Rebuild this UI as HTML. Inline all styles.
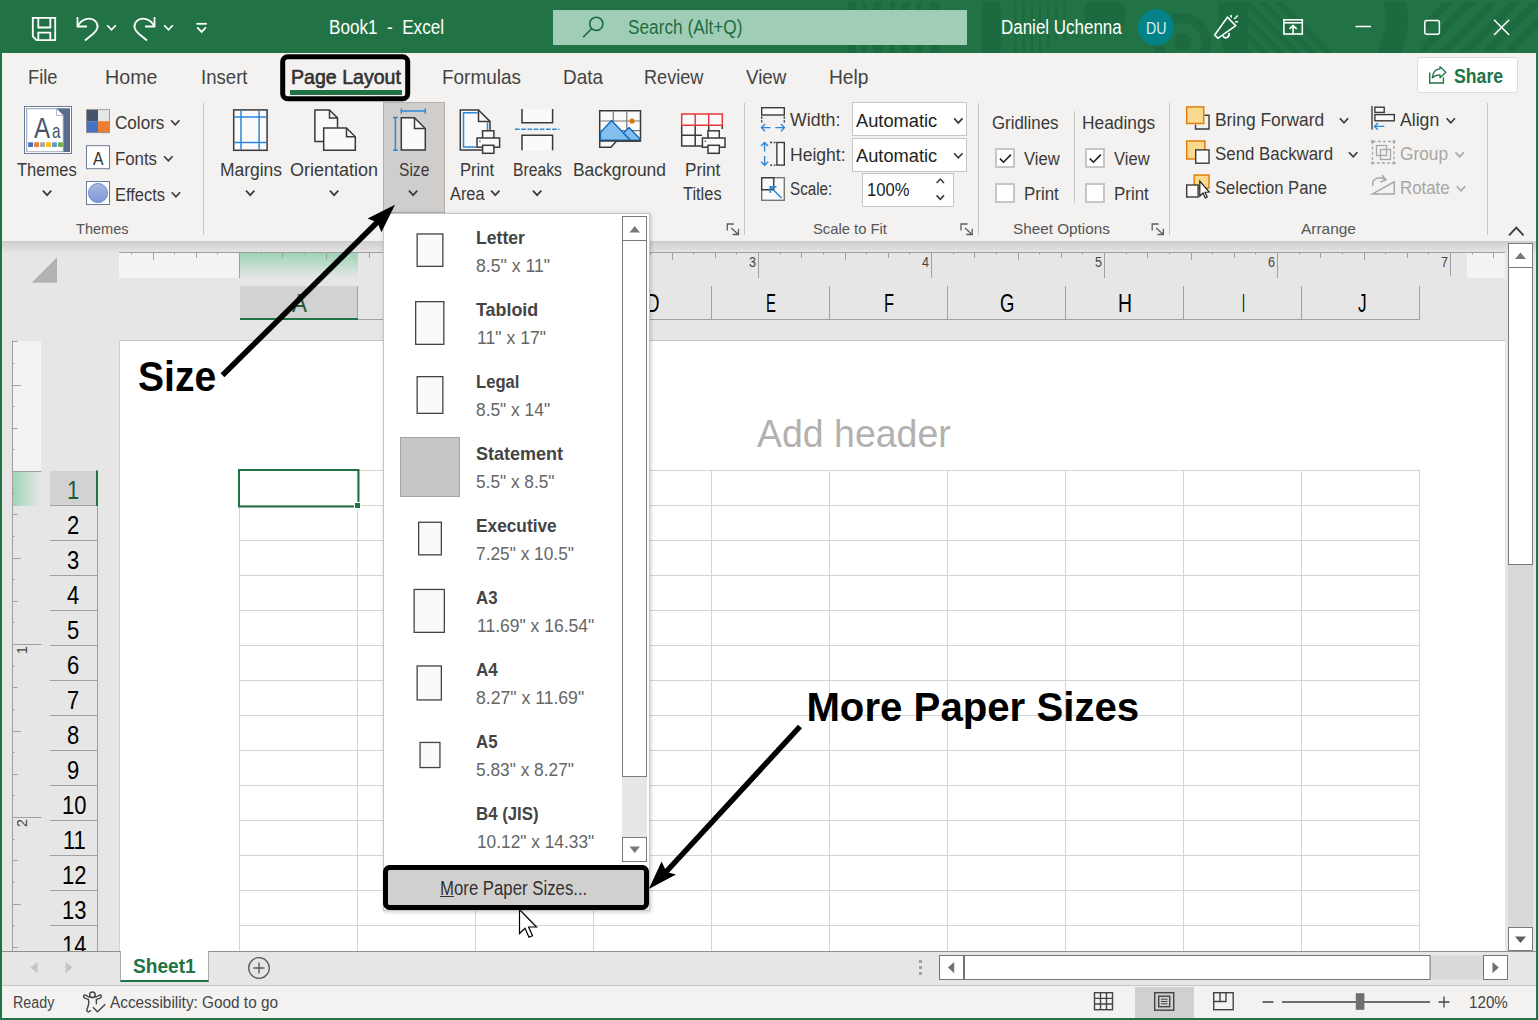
<!DOCTYPE html>
<html lang="en"><head><meta charset="utf-8"><title>Book1 - Excel</title>
<style>
html,body{margin:0;padding:0;background:#fff}
body{width:1538px;height:1020px;position:relative;overflow:hidden;font-family:"Liberation Sans",sans-serif}
#app{position:absolute;left:0;top:0;width:1538px;height:1020px;overflow:hidden}
.b{position:absolute;display:block}
.t{position:absolute;display:block;white-space:pre;line-height:1;transform-origin:0 0}
svg{overflow:visible}
</style></head><body><div id="app">
<div id="titlebar">
<div class="b" style="left:0px;top:0px;width:1538px;height:53px;background:#217346"></div>
<svg class="b" style="left:0px;top:0px;" width="1538" height="53" viewBox="0 0 1538 53">
<defs><clipPath id="tbc"><rect x="0" y="2" width="1538" height="51"/></clipPath>
<clipPath id="tbl"><rect x="1247" y="2" width="120" height="51"/></clipPath>
<clipPath id="tbr"><path d="M1430 2 L1422 51 H1538 V2 Z"/></clipPath></defs>
<g clip-path="url(#tbc)">
<g fill="#1e6a40" stroke="none">
 <rect x="848" y="0" width="8" height="53"/><rect x="862" y="0" width="5" height="53"/><rect x="873" y="0" width="9" height="53"/><rect x="890" y="0" width="5" height="53"/><rect x="901" y="0" width="8" height="53"/><rect x="916" y="0" width="6" height="53"/><rect x="930" y="0" width="10" height="53"/>
 <rect x="981.700" y="0" width="19" height="53"/>
 <rect x="1014.200" y="0" width="2.400" height="53"/><rect x="1022.400" y="0" width="2.400" height="53"/><rect x="1030.600" y="0" width="2.400" height="53"/><rect x="1038.800" y="0" width="2.400" height="53"/><rect x="1047" y="0" width="2.400" height="46"/><rect x="1055.200" y="0" width="2.400" height="40"/><rect x="1063.300" y="0" width="2.400" height="40"/>
 <circle cx="1105" cy="14" r="21"/>
 <circle cx="1182.500" cy="42" r="8.500"/>
 <path d="M1226 0 Q1224 30 1232 53 H1248 V0 Z"/>
</g>
<g fill="none" stroke="#1e6a40">
 <circle cx="1182.500" cy="42" r="24" stroke-width="10"/>
 <circle cx="1313" cy="18" r="83.750" stroke-width="22.500"/>
</g>
<g fill="#1e6a40" clip-path="url(#tbl)"><path d="M1193.3 2 H1201.5 L1252.5 53 H1244.3 Z"/><path d="M1209.3 2 H1217.5 L1268.5 53 H1260.3 Z"/><path d="M1225.3 2 H1233.5 L1284.5 53 H1276.3 Z"/><path d="M1241.3 2 H1249.5 L1300.5 53 H1292.3 Z"/><path d="M1257.3 2 H1265.5 L1316.5 53 H1308.3 Z"/><path d="M1273.3 2 H1281.5 L1332.5 53 H1324.3 Z"/></g>
<g fill="#1e6a40" clip-path="url(#tbr)"><path d="M1443.3 2 H1454.3 L1403.3 53 H1392.3 Z"/><path d="M1465.3 2 H1476.3 L1425.3 53 H1414.3 Z"/><path d="M1487.3 2 H1498.3 L1447.3 53 H1436.3 Z"/><path d="M1509.3 2 H1520.3 L1469.3 53 H1458.3 Z"/><path d="M1531.3 2 H1542.3 L1491.3 53 H1480.3 Z"/><path d="M1553.3 2 H1564.3 L1513.3 53 H1502.3 Z"/></g>
</g>
</svg>
<div class="b" style="left:553px;top:10px;width:414px;height:35px;background:#a0cdb5"></div>
<svg class="b" style="left:0px;top:0px;" width="1538" height="53" viewBox="0 0 1538 53">
<g fill="none" stroke="#fff" stroke-width="1.800" stroke-linejoin="miter">
 <path d="M32.8 17.8 H55.2 V40.2 H36.5 L32.8 36.5 Z"/>
 <path d="M38.3 17.8 V27.5 H50.3 V17.8"/>
 <path d="M38.3 40.2 V32.6 H50.3 V40.2"/>
 <path d="M77.5 17 V26.5 H87"/>
 <path d="M77.8 26.3 C81 19.5 90 16 95.2 21 C99.5 25.5 97.5 30 93.5 33.5 L85 40.5"/>
 <path d="M154.5 17 V26.5 H145"/>
 <path d="M154.2 26.3 C151 19.5 142 16 136.8 21 C132.500 25.5 134.500 30 138.500 33.5 L147 40.5"/>
 <path d="M196.500 23.800 H206.800"/>
</g>
<polyline points="107.2,25.25 111.5,29.75 115.8,25.25" fill="none" stroke="#fff" stroke-width="1.8"/><polyline points="164.2,25.25 168.5,29.75 172.8,25.25" fill="none" stroke="#fff" stroke-width="1.8"/><polyline points="197.3,27.35 201.6,31.85 205.9,27.35" fill="none" stroke="#fff" stroke-width="1.8"/><g fill="none" stroke="#1e6e42" stroke-width="1.6"><circle cx="596.3" cy="23.8" r="6.6"/><path d="M591.6 28.600 L583.200 37.200"/></g><circle cx="1156" cy="27.400" r="18.200" fill="#038387"/><g fill="none" stroke="#fff" stroke-width="1.600" stroke-linejoin="miter" stroke-linecap="butt">
<path d="M1214.700 35 L1227.400 17.300 L1235.700 25.600 L1218 38.300 Z"/>
<path d="M1222.600 35.200 Q1224 38.600 1227 37.600 Q1229.700 36.400 1229 32.800"/>
<path d="M1230.800 15 L1231.300 17.600 M1234.300 19 L1237.800 15.500 M1235.200 21.800 H1238"/>
</g><g fill="none" stroke="#fff" stroke-width="1.600"><rect x="1283.900" y="19.800" width="18.400" height="14.200"/><path d="M1284 22.800 H1302"/><path d="M1293.100 34 V26 M1289.500 28.800 L1293.100 25.600 L1296.700 28.800"/></g><g fill="none" stroke="#fff" stroke-width="1.5"><path d="M1355.500 26.500 H1371"/><rect x="1424.800" y="20.600" width="14.600" height="13.600" rx="2"/><path d="M1494 19.800 L1509.200 35 M1509.200 19.800 L1494 35"/></g></svg>
<span class="t" style="left:329.00px;top:18.00px;font-size:19.5px;color:#fff;transform:scaleX(0.8769);">Book1  -  Excel</span>
<span class="t" style="left:627.50px;top:18.00px;font-size:19.5px;color:#1e6e42;transform:scaleX(0.8842);">Search (Alt+Q)</span>
<span class="t" style="left:1000.80px;top:18.00px;font-size:19.5px;color:#fff;transform:scaleX(0.8699);">Daniel Uchenna</span>
<span class="t" style="left:1146.00px;top:20.00px;font-size:17px;color:#d7eef0;transform:scaleX(0.8350);">DU</span>
</div>
<div id="ribbon">
<div class="b" style="left:0px;top:53px;width:1538px;height:188px;background:#f3f2f1"></div>
<span class="t" style="left:27.50px;top:67.00px;font-size:20.3px;color:#444;transform:scaleX(0.9021);">File</span>
<span class="t" style="left:104.50px;top:67.00px;font-size:20.3px;color:#444;transform:scaleX(0.9695);">Home</span>
<span class="t" style="left:200.50px;top:67.00px;font-size:20.3px;color:#444;transform:scaleX(0.9163);">Insert</span>
<span class="t" style="left:442.00px;top:67.00px;font-size:20.3px;color:#444;transform:scaleX(0.9338);">Formulas</span>
<span class="t" style="left:562.50px;top:67.00px;font-size:20.3px;color:#444;transform:scaleX(0.9324);">Data</span>
<span class="t" style="left:643.50px;top:67.00px;font-size:20.3px;color:#444;transform:scaleX(0.8927);">Review</span>
<span class="t" style="left:745.50px;top:67.00px;font-size:20.3px;color:#444;transform:scaleX(0.9268);">View</span>
<span class="t" style="left:829.00px;top:67.00px;font-size:20.3px;color:#444;transform:scaleX(0.9461);">Help</span>
<span class="t" style="left:290.80px;top:67.00px;font-size:20.3px;color:#323130;transform:scaleX(0.9649);-webkit-text-stroke:0.600px #323130;">Page Layout</span>
<div class="b" style="left:290px;top:90px;width:112px;height:4.5px;background:#217346"></div>
<div class="b" style="left:1417px;top:57px;width:101px;height:36px;background:#fff;border:1px solid #dddbd9;border-radius:4px;box-sizing:border-box"></div>
<span class="t" style="left:1454.00px;top:66.00px;font-size:20.3px;color:#217346;font-weight:700;transform:scaleX(0.8723);">Share</span>
<div class="b" style="left:203px;top:103px;width:1px;height:132px;background:#c8c6c4"></div>
<div class="b" style="left:744px;top:103px;width:1px;height:132px;background:#c8c6c4"></div>
<div class="b" style="left:978px;top:103px;width:1px;height:132px;background:#c8c6c4"></div>
<div class="b" style="left:1169px;top:103px;width:1px;height:132px;background:#c8c6c4"></div>
<div class="b" style="left:1487px;top:103px;width:1px;height:132px;background:#c8c6c4"></div>
<div class="b" style="left:1074px;top:111px;width:1px;height:92px;background:#c8c6c4"></div>
<div class="b" style="left:383px;top:102px;width:62px;height:111px;background:#d0cecc;border:1px solid #b3b0ad;box-sizing:border-box"></div>
<div class="b" style="left:852.4px;top:102.3px;width:114.2px;height:34px;background:#fff;border:1px solid #c8c6c4;box-sizing:border-box"></div>
<div class="b" style="left:852.4px;top:137.5px;width:114.2px;height:34px;background:#fff;border:1px solid #c8c6c4;box-sizing:border-box"></div>
<div class="b" style="left:862.4px;top:172.6px;width:91.2px;height:34px;background:#fff;border:1px solid #c8c6c4;box-sizing:border-box"></div>
<div class="b" style="left:995.3px;top:148.4px;width:19.5px;height:19.5px;background:#fff;border:2px solid #c8c6c4;box-sizing:border-box"></div>
<div class="b" style="left:995.3px;top:183.2px;width:19.5px;height:19.5px;background:#fff;border:2px solid #c8c6c4;box-sizing:border-box"></div>
<div class="b" style="left:1085.2px;top:148.4px;width:19.5px;height:19.5px;background:#fff;border:2px solid #c8c6c4;box-sizing:border-box"></div>
<div class="b" style="left:1085.2px;top:183.2px;width:19.5px;height:19.5px;background:#fff;border:2px solid #c8c6c4;box-sizing:border-box"></div>
<span class="t" style="left:17.30px;top:161.00px;font-size:18px;color:#3b3a39;transform:scaleX(0.9185);">Themes</span>
<span class="t" style="left:114.60px;top:114.00px;font-size:18px;color:#3b3a39;transform:scaleX(0.9500);">Colors</span>
<span class="t" style="left:115.00px;top:150.00px;font-size:18px;color:#3b3a39;transform:scaleX(0.9333);">Fonts</span>
<span class="t" style="left:115.00px;top:186.00px;font-size:18px;color:#3b3a39;transform:scaleX(0.9141);">Effects</span>
<span class="t" style="left:220.20px;top:161.00px;font-size:18px;color:#3b3a39;transform:scaleX(0.9688);">Margins</span>
<span class="t" style="left:290.40px;top:161.00px;font-size:18px;color:#3b3a39;transform:scaleX(0.9994);">Orientation</span>
<span class="t" style="left:398.70px;top:161.00px;font-size:18px;color:#3b3a39;transform:scaleX(0.8657);">Size</span>
<span class="t" style="left:459.50px;top:161.00px;font-size:18px;color:#3b3a39;transform:scaleX(0.9216);">Print</span>
<span class="t" style="left:449.90px;top:185.00px;font-size:18px;color:#3b3a39;transform:scaleX(0.9093);">Area</span>
<span class="t" style="left:513.20px;top:161.00px;font-size:18px;color:#3b3a39;transform:scaleX(0.8714);">Breaks</span>
<span class="t" style="left:573.00px;top:161.00px;font-size:18px;color:#3b3a39;transform:scaleX(0.9682);">Background</span>
<span class="t" style="left:685.00px;top:161.00px;font-size:18px;color:#3b3a39;transform:scaleX(0.9541);">Print</span>
<span class="t" style="left:682.70px;top:185.00px;font-size:18px;color:#3b3a39;transform:scaleX(0.9115);">Titles</span>
<span class="t" style="left:790.00px;top:111.00px;font-size:18px;color:#3b3a39;transform:scaleX(0.9882);">Width:</span>
<span class="t" style="left:790.00px;top:146.00px;font-size:18px;color:#3b3a39;transform:scaleX(0.9746);">Height:</span>
<span class="t" style="left:790.00px;top:180.00px;font-size:18px;color:#3b3a39;transform:scaleX(0.8452);">Scale:</span>
<span class="t" style="left:856.00px;top:112.00px;font-size:18px;color:#201f1e;transform:scaleX(1.0144);">Automatic</span>
<span class="t" style="left:856.00px;top:147.00px;font-size:18px;color:#201f1e;transform:scaleX(1.0144);">Automatic</span>
<span class="t" style="left:866.60px;top:181.00px;font-size:18px;color:#201f1e;transform:scaleX(0.9229);">100%</span>
<span class="t" style="left:991.60px;top:114.00px;font-size:18px;color:#3b3a39;transform:scaleX(0.9360);">Gridlines</span>
<span class="t" style="left:1081.80px;top:114.00px;font-size:18px;color:#3b3a39;transform:scaleX(0.9638);">Headings</span>
<span class="t" style="left:1023.80px;top:150.00px;font-size:18px;color:#3b3a39;transform:scaleX(0.9213);">View</span>
<span class="t" style="left:1024.20px;top:185.00px;font-size:18px;color:#3b3a39;transform:scaleX(0.9378);">Print</span>
<span class="t" style="left:1113.70px;top:150.00px;font-size:18px;color:#3b3a39;transform:scaleX(0.9213);">View</span>
<span class="t" style="left:1114.10px;top:185.00px;font-size:18px;color:#3b3a39;transform:scaleX(0.9378);">Print</span>
<span class="t" style="left:1214.70px;top:111.00px;font-size:18px;color:#3b3a39;transform:scaleX(0.9651);">Bring Forward</span>
<span class="t" style="left:1214.70px;top:145.00px;font-size:18px;color:#3b3a39;transform:scaleX(0.9369);">Send Backward</span>
<span class="t" style="left:1214.70px;top:179.00px;font-size:18px;color:#3b3a39;transform:scaleX(0.9240);">Selection Pane</span>
<span class="t" style="left:1399.80px;top:111.00px;font-size:18px;color:#3b3a39;transform:scaleX(0.9788);">Align</span>
<span class="t" style="left:1399.80px;top:145.00px;font-size:18px;color:#a8a6a4;transform:scaleX(0.9590);">Group</span>
<span class="t" style="left:1399.80px;top:179.00px;font-size:18px;color:#a8a6a4;transform:scaleX(0.9369);">Rotate</span>
<span class="t" style="left:75.60px;top:221.00px;font-size:15px;color:#555;transform:scaleX(0.9705);">Themes</span>
<span class="t" style="left:812.80px;top:221.00px;font-size:15px;color:#555;transform:scaleX(0.9860);">Scale to Fit</span>
<span class="t" style="left:1013.40px;top:221.00px;font-size:15px;color:#555;transform:scaleX(1.0195);">Sheet Options</span>
<span class="t" style="left:1300.90px;top:221.00px;font-size:15px;color:#555;transform:scaleX(1.0291);">Arrange</span>
<svg class="b" style="left:0px;top:0px;" width="1538" height="245" viewBox="0 0 1538 245"><rect x="24.500" y="106.500" width="47" height="47" fill="#fff" stroke="#6b7a99" stroke-width="1"/><rect x="26.500" y="108.500" width="43" height="43" fill="none" stroke="#9aa5b8" stroke-width="0.800"/><rect x="57" y="108.500" width="13" height="43.500" fill="#5a6b8c"/><path d="M26.800 108.800 H56.500 L63.200 115.500 V151.700 H26.800 Z" fill="#fff" stroke="#9aa5b8" stroke-width="0.800"/><path d="M56.500 108.800 V115.500 H63.200" fill="#fff" stroke="#9aa5b8" stroke-width="0.800"/><rect x="28.2" y="142.300" width="4.800" height="4.700" fill="#4472c4"/><rect x="34.17" y="142.300" width="4.800" height="4.700" fill="#ed7d31"/><rect x="40.14" y="142.300" width="4.800" height="4.700" fill="#a5a5a5"/><rect x="46.11" y="142.300" width="4.800" height="4.700" fill="#ffc000"/><rect x="52.08" y="142.300" width="4.800" height="4.700" fill="#5b9bd5"/><rect x="58.05" y="142.300" width="4.800" height="4.700" fill="#70ad47"/><rect x="86.500" y="109.700" width="11.500" height="11.500" fill="#44546a"/><rect x="98" y="109.700" width="11.500" height="11.500" fill="#e7e6e6"/><rect x="86.500" y="121.200" width="11.500" height="11.500" fill="#4472c4"/><rect x="98" y="121.200" width="11.500" height="11.500" fill="#ed7d31"/><rect x="86.500" y="109.700" width="23" height="23" fill="none" stroke="#8a8886" stroke-width="0.800"/><rect x="86.500" y="145.700" width="23" height="23" fill="#fff" stroke="#6b7a99" stroke-width="1"/><rect x="86.500" y="181.500" width="23" height="23" fill="#fff" stroke="#6b7a99" stroke-width="1"/><defs><linearGradient id="eg" x1="0" y1="0" x2="0" y2="1"><stop offset="0" stop-color="#a9b8e0"/><stop offset="1" stop-color="#7f97d6"/></linearGradient></defs><circle cx="98" cy="193" r="9.600" fill="url(#eg)" stroke="#5b7fd0" stroke-width="0.800"/><rect x="233.700" y="109.900" width="33.400" height="40.400" fill="#fafafa" stroke="#3b3a39" stroke-width="1.500"/><path d="M241 110.500 V149.700 M259.100 110.500 V149.700 M234.400 117.100 H266.400 M234.400 142.600 H266.400" stroke="#2b88d8" stroke-width="1.500" fill="none"/><path d="M323 141.500 H314.900 V109.900 H329.500 L337.500 117.900 V127.500" fill="#fafafa" stroke="#3b3a39" stroke-width="1.500"/><path d="M329.500 109.900 V117.900 H337.500" fill="none" stroke="#3b3a39" stroke-width="1.500"/><path d="M323.700 127.900 H346.500 L355.300 136.700 V150.300 H323.700 Z" fill="#fafafa" stroke="#3b3a39" stroke-width="1.500"/><path d="M346.500 127.900 V136.700 H355.300" fill="none" stroke="#3b3a39" stroke-width="1.500"/><path d="M401.300 117.700 H414.500 L425.300 128.500 V150 H401.300 Z" fill="#fafafa" stroke="#3b3a39" stroke-width="1.500"/><path d="M414.500 117.700 V128.500 H425.300" fill="none" stroke="#3b3a39" stroke-width="1.500"/><path d="M401.300 111 H425.300 M401.300 108.500 V113.500 M425.300 108.500 V113.500 M395.400 117.500 V150.200 M393 117.500 H397.800 M393 150.200 H397.800" stroke="#2b88d8" stroke-width="1.500" fill="none"/><path d="M460.300 109.900 H478.500 L490 121.400 V150 H460.300 Z" fill="#fafafa" stroke="#3b3a39" stroke-width="1.500"/><path d="M478.500 109.900 V121.400 H490" fill="none" stroke="#3b3a39" stroke-width="1.500"/><path d="M477.500 112.800 H463.500 V147 H476 M487.500 122.500 V131" fill="none" stroke="#2b88d8" stroke-width="1.500"/><rect x="482.6" y="130.800" width="11.300" height="8" fill="#fafafa" stroke="#3b3a39" stroke-width="1.500"/><rect x="477" y="138" width="22.600" height="9.200" fill="#fafafa" stroke="#3b3a39" stroke-width="1.500"/><rect x="482.6" y="145.300" width="11.300" height="8" fill="#fafafa" stroke="#3b3a39" stroke-width="1.500"/><rect x="479.3" y="140.600" width="1.300" height="1.300" fill="#3b3a39"/><path d="M522 109 V122.800 H552.600 V109" fill="#fafafa" stroke="#3b3a39" stroke-width="1.500"/><path d="M522 150.300 V135.300 H552.600 V150.300" fill="#fafafa" stroke="#3b3a39" stroke-width="1.500"/><path d="M515 129.200 H559.500" stroke="#2b88d8" stroke-width="1.500" stroke-dasharray="4.600 1.600" fill="none"/><path d="M599.700 110.700 H640.500 V141 H616.500 L611 147.200 H599.700 Z" fill="#fafafa" stroke="#3b3a39" stroke-width="1.500"/><path d="M613.300 111 V140 M626.800 111 V140 M600 121 H640 M600 130.600 H640" stroke="#797775" stroke-width="1.200" fill="none"/><path d="M600.400 132.600 L611.500 120.500 L630.500 140.300 H600.400 Z" fill="#83beec" stroke="#0f6cbd" stroke-width="1.400" stroke-linejoin="round"/><path d="M623.500 133 L629 127.500 L639.800 138.800 V140.300 H630.500 Z" fill="#83beec" stroke="#0f6cbd" stroke-width="1.400" stroke-linejoin="round"/><path d="M599.700 141 H640.500" stroke="#3b3a39" stroke-width="1.500"/><circle cx="632" cy="121" r="2.600" fill="#e07200"/><rect x="681.700" y="125.300" width="40.600" height="20.600" fill="#fafafa" stroke="none"/><path d="M681.700 125.300 V145.900 H702 M695.200 125.300 V145.900 M708.700 125.300 V131 M681.700 135.300 H702 M722.300 125.300 V129" stroke="#3b3a39" stroke-width="1.500" fill="none"/><path d="M681.700 114 H722.300 V125.300 H681.700 Z M695.200 114 V125.300 M708.700 114 V125.300" stroke="#e8383d" stroke-width="1.500" fill="#fafafa"/><rect x="708" y="130.800" width="11.300" height="8" fill="#fafafa" stroke="#3b3a39" stroke-width="1.500"/><rect x="702.4" y="138" width="22.600" height="9.200" fill="#fafafa" stroke="#3b3a39" stroke-width="1.500"/><rect x="708" y="145.300" width="11.300" height="8" fill="#fafafa" stroke="#3b3a39" stroke-width="1.500"/><rect x="704.7" y="140.600" width="1.300" height="1.300" fill="#3b3a39"/><rect x="761.700" y="107.700" width="22.600" height="7.300" fill="#fafafa" stroke="#3b3a39" stroke-width="1.400"/><path d="M761.700 116.500 V123 M784.300 116.500 V123" stroke="#3b3a39" stroke-width="1.400" stroke-dasharray="2.200 1.600"/><path d="M761.500 127.600 H770.500 M765 124 L761.500 127.600 L765 131.200 M775.300 127.600 H784.500 M781 124 L784.500 127.600 L781 131.200" stroke="#2b88d8" stroke-width="1.400" fill="none"/><rect x="776.900" y="142.500" width="7.400" height="22.600" fill="#fafafa" stroke="#3b3a39" stroke-width="1.400"/><path d="M770 142.500 H775.500 M770 165.100 H775.500" stroke="#3b3a39" stroke-width="1.400" stroke-dasharray="2.200 1.600"/><path d="M764.600 142.500 V151.500 M761 146 L764.600 142.500 L768.200 146 M764.600 156 V165.200 M761 161.700 L764.600 165.200 L768.200 161.700" stroke="#2b88d8" stroke-width="1.400" fill="none"/><rect x="761.700" y="177.700" width="22.600" height="22.600" fill="#fafafa" stroke="#797775" stroke-width="1.400"/><path d="M761.700 177.700 H773.800 V189.700 H761.700 Z" fill="#fafafa" stroke="#3b3a39" stroke-width="1.400"/><path d="M781.500 198 L770.500 187 M770.300 193 V186.800 H776.500" stroke="#2b88d8" stroke-width="1.500" fill="none"/><path d="M999.9 158.600 L1003.5 162.200 L1010.9 154.600" stroke="#201f1e" stroke-width="1.600" fill="none"/><path d="M1089.8 158.600 L1093.4 162.200 L1100.8 154.600" stroke="#201f1e" stroke-width="1.600" fill="none"/><path d="M1204.500 115.300 H1209 V129 H1195.500 V124.500" fill="none" stroke="#3b3a39" stroke-width="1.400"/><rect x="1186.700" y="106.900" width="17" height="16.600" fill="#fbd98f" stroke="#e07e0e" stroke-width="1.500"/><rect x="1186.700" y="141" width="18.200" height="18" fill="#fbd98f" stroke="#e07e0e" stroke-width="1.500"/><rect x="1195.700" y="149.900" width="13.300" height="13.300" fill="#fafafa" stroke="#3b3a39" stroke-width="1.400"/><rect x="1194.200" y="175.100" width="14.800" height="13" fill="#fbd98f" stroke="#e07e0e" stroke-width="1.500"/><rect x="1186.700" y="185" width="11.400" height="12" fill="#fafafa" stroke="#3b3a39" stroke-width="1.400"/><path d="M1199.800 181.200 V196 L1203 193 L1205.300 198 L1207.200 197 L1205 192.200 L1209.200 192 Z" fill="#fff" stroke="#201f1e" stroke-width="1.200"/><path d="M1372 106 V129.600" stroke="#3b3a39" stroke-width="1.400"/><rect x="1374.900" y="107.200" width="9.300" height="5.200" fill="#fafafa" stroke="#3b3a39" stroke-width="1.400"/><rect x="1374.900" y="114.600" width="19.400" height="6.200" fill="#fafafa" stroke="#3b3a39" stroke-width="1.400"/><path d="M1374.500 126.400 H1384.300 M1378 123 L1374.500 126.400 L1378 129.800" stroke="#2b88d8" stroke-width="1.400" fill="none"/><rect x="1372.500" y="141.500" width="21.500" height="21.500" fill="none" stroke="#a8a6a4" stroke-width="1.300" stroke-dasharray="3 2.200"/><rect x="1371.2" y="140.2" width="2.600" height="2.600" fill="#a8a6a4"/><rect x="1371.2" y="161.7" width="2.600" height="2.600" fill="#a8a6a4"/><rect x="1392.7" y="140.2" width="2.600" height="2.600" fill="#a8a6a4"/><rect x="1392.7" y="161.7" width="2.600" height="2.600" fill="#a8a6a4"/><rect x="1376.500" y="145.500" width="10" height="10" fill="none" stroke="#a8a6a4" stroke-width="1.300"/><rect x="1380.500" y="149.500" width="10" height="10" fill="none" stroke="#a8a6a4" stroke-width="1.300"/><path d="M1372.500 194 H1394.300 V181.800 Z" fill="none" stroke="#a8a6a4" stroke-width="1.400"/><path d="M1373 186 C1371 179 1379 175.500 1385.500 179.500 M1382 175 L1386 179.700 L1380.500 182" fill="none" stroke="#a8a6a4" stroke-width="1.400"/><path d="M1429.700 72.400 V83 H1443.400 V77.200" fill="none" stroke="#217346" stroke-width="1.400"/><path d="M1432.300 77.800 C1433 71.500 1436.800 69 1440 68.800 V66.600 L1445.800 72.300 L1440 77.800 V74.800 C1437 74.800 1434.500 75.600 1432.300 77.800 Z" fill="none" stroke="#217346" stroke-width="1.300" stroke-linejoin="round"/><path d="M727.3 230.500 V224 H733.8 M731.3 228 L738.1 234.300 M738.5 228.800 V234.500 H732.6" fill="none" stroke="#605e5c" stroke-width="1.300"/><path d="M961 230.500 V224 H967.5 M965 228 L971.8 234.300 M972.2 228.800 V234.500 H966.3" fill="none" stroke="#605e5c" stroke-width="1.300"/><path d="M1152.2 230.500 V224 H1158.7 M1156.2 228 L1163 234.300 M1163.4 228.800 V234.500 H1157.5" fill="none" stroke="#605e5c" stroke-width="1.300"/><polyline points="42.9,190.65 47.1,195.15 51.3,190.65" fill="none" stroke="#3b3a39" stroke-width="1.7"/><polyline points="246,190.65 250.2,195.15 254.4,190.65" fill="none" stroke="#3b3a39" stroke-width="1.7"/><polyline points="329.9,190.65 334.1,195.15 338.3,190.65" fill="none" stroke="#3b3a39" stroke-width="1.7"/><polyline points="408.9,190.65 413.1,195.15 417.3,190.65" fill="none" stroke="#3b3a39" stroke-width="1.7"/><polyline points="491.1,190.65 495.3,195.15 499.5,190.65" fill="none" stroke="#3b3a39" stroke-width="1.7"/><polyline points="532.9,190.65 537.1,195.15 541.3,190.65" fill="none" stroke="#3b3a39" stroke-width="1.7"/><polyline points="171.1,120.25 175.3,124.75 179.5,120.25" fill="none" stroke="#3b3a39" stroke-width="1.7"/><polyline points="164.2,156.25 168.4,160.75 172.6,156.25" fill="none" stroke="#3b3a39" stroke-width="1.7"/><polyline points="171.7,192.25 175.9,196.75 180.1,192.25" fill="none" stroke="#3b3a39" stroke-width="1.7"/><polyline points="954.1,118.45 958.3,122.95 962.5,118.45" fill="none" stroke="#3b3a39" stroke-width="1.7"/><polyline points="954.1,153.25 958.3,157.75 962.5,153.25" fill="none" stroke="#3b3a39" stroke-width="1.7"/><polyline points="1339.8,118.25 1344,122.75 1348.2,118.25" fill="none" stroke="#3b3a39" stroke-width="1.7"/><polyline points="1349,152.25 1353.2,156.75 1357.4,152.25" fill="none" stroke="#3b3a39" stroke-width="1.7"/><polyline points="1446.6,118.25 1450.8,122.75 1455,118.25" fill="none" stroke="#3b3a39" stroke-width="1.7"/><polyline points="1455.5,152.25 1459.7,156.75 1463.9,152.25" fill="none" stroke="#a8a6a4" stroke-width="1.7"/><polyline points="1456.8,186.25 1461,190.75 1465.2,186.25" fill="none" stroke="#a8a6a4" stroke-width="1.7"/><polyline points="936.6,182.95 940.3,179.05 944,182.95" fill="none" stroke="#3b3a39" stroke-width="1.6"/><polyline points="936.6,195.35 940.3,199.25 944,195.35" fill="none" stroke="#3b3a39" stroke-width="1.6"/><polyline points="1509.05,235.35 1516.3,227.65 1523.55,235.35" fill="none" stroke="#3b3a39" stroke-width="1.8"/></svg>
<span class="t" style="left:33.90px;top:114.00px;font-size:29px;color:#44546a;transform:scaleX(0.8320);">A</span>
<span class="t" style="left:51.80px;top:121.00px;font-size:20.4px;color:#44546a;transform:scaleX(0.7489);">a</span>
<span class="t" style="left:92.80px;top:150.00px;font-size:18px;color:#333;transform:scaleX(0.8750);">A</span>
</div>
<div id="sheet">
<div class="b" style="left:0px;top:241px;width:1538px;height:710px;background:#e6e6e6"></div>
<div class="b" style="left:0px;top:241px;width:1538px;height:11.5px;background:linear-gradient(#cdcdcd,#e6e6e6)"></div>
<div class="b" style="left:119px;top:253px;width:121px;height:24.7px;background:#f3f3f3"></div>
<div class="b" style="left:240px;top:253px;width:118px;height:24.7px;background:linear-gradient(#9dd4b6,#e6e6e6)"></div>
<div class="b" style="left:1467px;top:253px;width:38px;height:24.7px;background:#f3f3f3"></div>
<div class="b" style="left:12px;top:340.5px;width:29px;height:130px;background:#f3f3f3"></div>
<div class="b" style="left:12px;top:470.5px;width:29px;height:35.5px;background:linear-gradient(90deg,#9dd4b6,#e6e6e6)"></div>
<div class="b" style="left:119px;top:340px;width:1386px;height:611px;background:#fff;border-top:1px solid #c6c6c6;border-left:1px solid #d0d0d0;box-sizing:border-box"></div>
<div class="b" style="left:240px;top:286px;width:118px;height:33.5px;background:#d2d2d2"></div>
<div class="b" style="left:50px;top:470.5px;width:47.5px;height:35.5px;background:#d2d2d2"></div>
<svg class="b" style="left:0px;top:241px;" width="1538" height="710" viewBox="0 241 1538 710"><path d="M119 252.500 H1505" stroke="#a0a0a0" stroke-width="1"/><path d="M12.500 340.500 V951" stroke="#a0a0a0" stroke-width="1"/><path d="M131.5 253 V254.50 M153.5 253 V260.00 M174.5 253 V254.50 M196.5 253 V258.00 M217.5 253 V254.50 M239.5 253 V278.00 M261.5 253 V254.50 M282.5 253 V258.00 M304.5 253 V254.50 M326.5 253 V260.00 M347.5 253 V254.50 M369.5 253 V258.00 M390.5 253 V254.50 M412.5 253 V278.00 M434.5 253 V254.50 M455.5 253 V258.00 M477.5 253 V254.50 M499.5 253 V260.00 M520.5 253 V254.50 M542.5 253 V258.00 M563.5 253 V254.50 M585.5 253 V278.00 M607.5 253 V254.50 M628.5 253 V258.00 M650.5 253 V254.50 M672.5 253 V260.00 M693.5 253 V254.50 M715.5 253 V258.00 M736.5 253 V254.50 M758.5 253 V278.00 M780.5 253 V254.50 M801.5 253 V258.00 M823.5 253 V254.50 M845.5 253 V260.00 M866.5 253 V254.50 M888.5 253 V258.00 M909.5 253 V254.50 M931.5 253 V278.00 M953.5 253 V254.50 M974.5 253 V258.00 M996.5 253 V254.50 M1018.5 253 V260.00 M1039.5 253 V254.50 M1061.5 253 V258.00 M1082.5 253 V254.50 M1104.5 253 V278.00 M1126.5 253 V254.50 M1147.5 253 V258.00 M1169.5 253 V254.50 M1191.5 253 V260.00 M1212.5 253 V254.50 M1234.5 253 V258.00 M1255.5 253 V254.50 M1277.5 253 V278.00 M1299.5 253 V254.50 M1320.5 253 V258.00 M1342.5 253 V254.50 M1364.5 253 V260.00 M1385.5 253 V254.50 M1407.5 253 V258.00 M1428.5 253 V254.50 M1450.5 253 V275.50 M1472.5 253 V254.50 M1493.5 253 V258.00 " stroke="#a0a0a0" stroke-width="1" fill="none"/><path d="M13 341.5 H17.60 M13 363.5 H14.50 M13 385.5 H20.70 M13 406.5 H14.50 M13 428.5 H17.60 M13 449.5 H14.50 M13 471.5 H41.50 M13 493.5 H14.50 M13 514.5 H17.60 M13 536.5 H14.50 M13 558.5 H20.70 M13 579.5 H14.50 M13 601.5 H17.60 M13 622.5 H14.50 M13 644.5 H41.50 M13 666.5 H14.50 M13 687.5 H17.60 M13 709.5 H14.50 M13 731.5 H20.70 M13 752.5 H14.50 M13 774.5 H17.60 M13 795.5 H14.50 M13 817.5 H41.50 M13 839.5 H14.50 M13 860.5 H17.60 M13 882.5 H14.50 M13 904.5 H20.70 M13 925.5 H14.50 M13 947.5 H17.60 " stroke="#a0a0a0" stroke-width="1" fill="none"/><path d="M240 319.500 H1420 M357.5 286 V319.500 M475.5 286 V319.500 M593.5 286 V319.500 M711.5 286 V319.500 M829.5 286 V319.500 M947.5 286 V319.500 M1065.5 286 V319.500 M1183.5 286 V319.500 M1301.5 286 V319.500 M1419.5 286 V319.500 " stroke="#a0a0a0" stroke-width="1" fill="none"/><path d="M240 319 H358" stroke="#217346" stroke-width="2"/><path d="M97.500 470.500 V951 M50 505.5 H97.500 M50 540.5 H97.500 M50 575.5 H97.500 M50 610.5 H97.500 M50 645.5 H97.500 M50 680.5 H97.500 M50 715.5 H97.500 M50 750.5 H97.500 M50 785.5 H97.500 M50 820.5 H97.500 M50 855.5 H97.500 M50 890.5 H97.500 M50 925.5 H97.500 M50 960.5 H97.500 " stroke="#a0a0a0" stroke-width="1" fill="none"/><path d="M97 470.500 V506" stroke="#217346" stroke-width="2"/><path d="M239.5 470.500 V951 M357.5 470.500 V951 M475.5 470.500 V951 M593.5 470.500 V951 M711.5 470.500 V951 M829.5 470.500 V951 M947.5 470.500 V951 M1065.5 470.500 V951 M1183.5 470.500 V951 M1301.5 470.500 V951 M1419.5 470.500 V951 M240 470.5 H1420 M240 505.5 H1420 M240 540.5 H1420 M240 575.5 H1420 M240 610.5 H1420 M240 645.5 H1420 M240 680.5 H1420 M240 715.5 H1420 M240 750.5 H1420 M240 785.5 H1420 M240 820.5 H1420 M240 855.5 H1420 M240 890.5 H1420 M240 925.5 H1420 M240 960.5 H1420 " stroke="#d4d4d4" stroke-width="1" fill="none"/><path d="M57 257.200 V282.700 H31.500 Z" fill="#b2b2b2"/><rect x="239" y="470" width="119.500" height="36.500" fill="none" stroke="#217346" stroke-width="2"/><rect x="354.500" y="502.500" width="6" height="6" fill="#217346" stroke="#fff" stroke-width="1"/></svg>
<span class="t" style="left:291.50px;top:291.00px;font-size:25px;color:#1e5c3a;transform:scaleX(0.8982);">A</span>
<span class="t" style="left:411.25px;top:291.00px;font-size:25px;color:#000;transform:scaleX(0.6886);">B</span>
<span class="t" style="left:529.00px;top:291.00px;font-size:25px;color:#000;transform:scaleX(0.6648);">C</span>
<span class="t" style="left:646.25px;top:291.00px;font-size:25px;color:#000;transform:scaleX(0.7479);">D</span>
<span class="t" style="left:766.00px;top:291.00px;font-size:25px;color:#000;transform:scaleX(0.5988);">E</span>
<span class="t" style="left:884.00px;top:291.00px;font-size:25px;color:#000;transform:scaleX(0.6557);">F</span>
<span class="t" style="left:999.80px;top:291.00px;font-size:25px;color:#000;transform:scaleX(0.7404);">G</span>
<span class="t" style="left:1118.00px;top:291.00px;font-size:25px;color:#000;transform:scaleX(0.7756);">H</span>
<span class="t" style="left:1241.50px;top:291.00px;font-size:25px;color:#000;transform:scaleX(0.4317);">I</span>
<span class="t" style="left:1358.00px;top:291.00px;font-size:25px;color:#000;transform:scaleX(0.6880);">J</span>
<div class="b" style="left:0;top:241px;width:119px;height:710px;overflow:hidden"><span class="t" style="left:67.38px;top:237.00px;font-size:25px;color:#1e5c3a;transform:scaleX(0.8800);">1</span>
<span class="t" style="left:67.38px;top:272.00px;font-size:25px;color:#000;transform:scaleX(0.8800);">2</span>
<span class="t" style="left:67.38px;top:307.00px;font-size:25px;color:#000;transform:scaleX(0.8800);">3</span>
<span class="t" style="left:67.38px;top:342.00px;font-size:25px;color:#000;transform:scaleX(0.8800);">4</span>
<span class="t" style="left:67.38px;top:377.00px;font-size:25px;color:#000;transform:scaleX(0.8800);">5</span>
<span class="t" style="left:67.38px;top:412.00px;font-size:25px;color:#000;transform:scaleX(0.8800);">6</span>
<span class="t" style="left:67.38px;top:447.00px;font-size:25px;color:#000;transform:scaleX(0.8800);">7</span>
<span class="t" style="left:67.38px;top:482.00px;font-size:25px;color:#000;transform:scaleX(0.8800);">8</span>
<span class="t" style="left:67.38px;top:517.00px;font-size:25px;color:#000;transform:scaleX(0.8800);">9</span>
<span class="t" style="left:62.47px;top:552.00px;font-size:25px;color:#000;transform:scaleX(0.8800);">10</span>
<span class="t" style="left:63.28px;top:587.00px;font-size:25px;color:#000;transform:scaleX(0.8800);">11</span>
<span class="t" style="left:62.47px;top:622.00px;font-size:25px;color:#000;transform:scaleX(0.8800);">12</span>
<span class="t" style="left:62.47px;top:657.00px;font-size:25px;color:#000;transform:scaleX(0.8800);">13</span>
<span class="t" style="left:62.47px;top:692.00px;font-size:25px;color:#000;transform:scaleX(0.8800);">14</span>
</div>
<span class="t" style="left:403.20px;top:255.00px;font-size:14.2px;color:#444;transform:scaleX(0.8861);">1</span>
<span class="t" style="left:576.20px;top:255.00px;font-size:14.2px;color:#444;transform:scaleX(0.8861);">2</span>
<span class="t" style="left:749.20px;top:255.00px;font-size:14.2px;color:#444;transform:scaleX(0.8861);">3</span>
<span class="t" style="left:922.20px;top:255.00px;font-size:14.2px;color:#444;transform:scaleX(0.8861);">4</span>
<span class="t" style="left:1095.20px;top:255.00px;font-size:14.2px;color:#444;transform:scaleX(0.8861);">5</span>
<span class="t" style="left:1268.20px;top:255.00px;font-size:14.2px;color:#444;transform:scaleX(0.8861);">6</span>
<span class="t" style="left:1441.20px;top:255.00px;font-size:14.2px;color:#444;transform:scaleX(0.8861);">7</span>
<span class="t" style="left:15.300px;top:653.5px;font-size:14.200px;color:#444;transform:rotate(-90deg);transform-origin:0 0;">1</span>
<span class="t" style="left:15.300px;top:826.5px;font-size:14.200px;color:#444;transform:rotate(-90deg);transform-origin:0 0;">2</span>
<span class="t" style="left:15.300px;top:999.5px;font-size:14.200px;color:#444;transform:rotate(-90deg);transform-origin:0 0;">3</span>
<span class="t" style="left:757.30px;top:414.00px;font-size:39.5px;color:#b3b1af;transform:scaleX(0.9483);">Add header</span>
<div class="b" style="left:1508px;top:243px;width:25px;height:708px;background:#d9d9d9"></div>
<div class="b" style="left:1508px;top:243px;width:25px;height:25px;background:#fff;border:1px solid #7a7a7a;box-sizing:border-box"></div>
<div class="b" style="left:1508px;top:267px;width:25px;height:298px;background:#fff;border:1px solid #7a7a7a;box-sizing:border-box"></div>
<div class="b" style="left:1508px;top:927px;width:25px;height:24px;background:#fff;border:1px solid #7a7a7a;box-sizing:border-box"></div>
<svg class="b" style="left:1508px;top:243px;" width="25" height="708" viewBox="0 0 25 708"><path d="M7 16 L12.500 9.500 L18 16 Z" fill="#777"/><path d="M7 693.500 L12.500 700 L18 693.500 Z" fill="#606060"/></svg>
</div>
<div id="dropdown">
<div class="b" style="left:383px;top:213px;width:267px;height:698px;background:#fff;border:1px solid #c6c6c6;box-sizing:border-box;box-shadow:1px 1px 4px rgba(0,0,0,.2)"></div>
<div class="b" style="left:400px;top:437px;width:60.3px;height:60px;background:#c6c6c6;border:1px solid #a6a6a6;box-sizing:border-box"></div>
<span class="t" style="left:476.00px;top:229.00px;font-size:18.4px;color:#444;font-weight:700;transform:scaleX(0.9569);">Letter</span>
<span class="t" style="left:475.90px;top:257.00px;font-size:18.6px;color:#666;transform:scaleX(0.9500);">8.5" x 11"</span>
<span class="t" style="left:476.00px;top:301.00px;font-size:18.4px;color:#444;font-weight:700;transform:scaleX(0.9711);">Tabloid</span>
<span class="t" style="left:476.90px;top:329.00px;font-size:18.6px;color:#666;transform:scaleX(0.9485);">11" x 17"</span>
<span class="t" style="left:476.00px;top:373.00px;font-size:18.4px;color:#444;font-weight:700;transform:scaleX(0.9032);">Legal</span>
<span class="t" style="left:475.90px;top:401.00px;font-size:18.6px;color:#666;transform:scaleX(0.9332);">8.5" x 14"</span>
<span class="t" style="left:476.00px;top:445.00px;font-size:18.4px;color:#444;font-weight:700;transform:scaleX(0.9792);">Statement</span>
<span class="t" style="left:475.90px;top:473.00px;font-size:18.6px;color:#666;transform:scaleX(0.9273);">5.5" x 8.5"</span>
<span class="t" style="left:476.00px;top:517.00px;font-size:18.4px;color:#444;font-weight:700;transform:scaleX(0.9395);">Executive</span>
<span class="t" style="left:475.90px;top:545.00px;font-size:18.6px;color:#666;transform:scaleX(0.9311);">7.25" x 10.5"</span>
<span class="t" style="left:476.00px;top:589.00px;font-size:18.4px;color:#444;font-weight:700;transform:scaleX(0.9149);">A3</span>
<span class="t" style="left:476.90px;top:617.00px;font-size:18.6px;color:#666;transform:scaleX(0.9410);">11.69" x 16.54"</span>
<span class="t" style="left:476.00px;top:661.00px;font-size:18.4px;color:#444;font-weight:700;transform:scaleX(0.9277);">A4</span>
<span class="t" style="left:475.90px;top:689.00px;font-size:18.6px;color:#666;transform:scaleX(0.9475);">8.27" x 11.69"</span>
<span class="t" style="left:476.00px;top:733.00px;font-size:18.4px;color:#444;font-weight:700;transform:scaleX(0.9149);">A5</span>
<span class="t" style="left:475.90px;top:761.00px;font-size:18.6px;color:#666;transform:scaleX(0.9311);">5.83" x 8.27"</span>
<span class="t" style="left:476.00px;top:805.00px;font-size:18.4px;color:#444;font-weight:700;transform:scaleX(0.9139);">B4 (JIS)</span>
<span class="t" style="left:476.90px;top:833.00px;font-size:18.6px;color:#666;transform:scaleX(0.9305);">10.12" x 14.33"</span>
<svg class="b" style="left:0px;top:0px;pointer-events:none" width="1538" height="1020" viewBox="0 0 1538 1020"><rect x="417.15" y="233.95" width="25.7" height="32.4" fill="#fafafa" stroke="#444" stroke-width="1.300"/><rect x="415.65" y="301.65" width="28.2" height="42.7" fill="#fafafa" stroke="#444" stroke-width="1.300"/><rect x="417.15" y="376.65" width="25.7" height="36.7" fill="#fafafa" stroke="#444" stroke-width="1.300"/><rect x="418.65" y="522.25" width="22.7" height="32.6" fill="#fafafa" stroke="#444" stroke-width="1.300"/><rect x="414.15" y="589.45" width="30.2" height="42.9" fill="#fafafa" stroke="#444" stroke-width="1.300"/><rect x="417.15" y="665.95" width="24.2" height="34" fill="#fafafa" stroke="#444" stroke-width="1.300"/><rect x="420.05" y="742.45" width="19.9" height="25.1" fill="#fafafa" stroke="#444" stroke-width="1.300"/><rect x="622" y="776" width="25" height="62" fill="#e6e6e6"/><rect x="622.500" y="216.500" width="24" height="24" fill="#fff" stroke="#7a7a7a"/><rect x="622.500" y="240.500" width="24" height="536" fill="#fff" stroke="#7a7a7a"/><rect x="622.500" y="837.500" width="24" height="24" fill="#fff" stroke="#7a7a7a"/><path d="M629.500 232.500 L634.700 226 L640 232.500 Z" fill="#777"/><path d="M629.500 846.500 L634.700 853 L640 846.500 Z" fill="#777"/></svg>
</div>
<div id="bottom">
<div class="b" style="left:0px;top:951px;width:1538px;height:35px;background:#e6e6e6;border-top:1px solid #8f8f8f;box-sizing:border-box"></div>
<div class="b" style="left:120px;top:951px;width:89px;height:31px;background:#fff;border-bottom:2px solid #217346;border-left:1px solid #ababab;border-right:1px solid #ababab;box-sizing:border-box"></div>
<span class="t" style="left:132.60px;top:956.00px;font-size:20.5px;color:#217346;font-weight:700;transform:scaleX(0.9315);">Sheet1</span>
<div class="b" style="left:0px;top:985px;width:1538px;height:35px;background:#f3f2f1;border-top:1px solid #c8c6c4;box-sizing:border-box"></div>
<div class="b" style="left:1134.5px;top:986.5px;width:59.5px;height:31px;background:#d2d0ce"></div>
<svg class="b" style="left:0px;top:951px;" width="1538" height="69" viewBox="0 951 1538 69"><path d="M37.500 962 V973.300 L30.500 967.600 Z" fill="#c4c4c4"/><path d="M65.500 962 V973.300 L72.500 967.600 Z" fill="#c4c4c4"/><circle cx="259" cy="968" r="10.300" fill="none" stroke="#5a5a5a" stroke-width="1.300"/><path d="M253.500 968 H264.500 M259 962.500 V973.500" stroke="#5a5a5a" stroke-width="1.400"/><rect x="1430" y="955.500" width="53.500" height="24" fill="#d9d9d9"/><rect x="939.500" y="955.500" width="24" height="24" fill="#fff" stroke="#747474"/><rect x="964.500" y="955.500" width="465.500" height="24" fill="#fff" stroke="#747474"/><rect x="1483.500" y="955.500" width="24" height="24" fill="#fff" stroke="#747474"/><path d="M954.200 962 V973.200 L947.900 967.600 Z" fill="#707070"/><path d="M1492.500 962 V973.200 L1498.800 967.600 Z" fill="#707070"/><path d="M920.500 960 V976" stroke="#a0a0a0" stroke-width="3" stroke-dasharray="3 3"/><g fill="none" stroke="#444" stroke-width="1.400" stroke-linecap="round" stroke-linejoin="round"><circle cx="92.400" cy="994.800" r="2.800"/><path d="M88.300 999.400 L84.800 998.200 Q82.300 996.600 84.600 994.800 Q88 996.900 92.400 997.600 Q96.800 996.900 100.300 994.800 Q102.500 996.600 100.200 998.200 L96.400 999.400 V1003.800"/><path d="M88.300 999.400 C89.500 1003 88.500 1006 86.900 1009.300 C86.100 1011.500 88.500 1012.500 90.600 1010.800"/><path d="M92.900 1007.200 L97.500 1011.800 L105.300 1004.200" stroke-linecap="butt" stroke-linejoin="miter"/></g><g fill="none" stroke="#444" stroke-width="1.400"><rect x="1094.500" y="992.700" width="18" height="17"/><path d="M1100.500 992.700 V1009.700 M1106.500 992.700 V1009.700 M1094.500 998.400 H1112.500 M1094.500 1004 H1112.500"/></g><g fill="none" stroke="#444" stroke-width="1.400"><rect x="1154.700" y="992.700" width="19" height="17.500"/><rect x="1158.700" y="996.200" width="11" height="10.500"/><path d="M1161 999.200 H1167.500 M1161 1001.500 H1167.500 M1161 1003.800 H1167.500" stroke-width="1"/></g><g fill="none" stroke="#444" stroke-width="1.400"><rect x="1213.700" y="992.700" width="19.500" height="17"/><path d="M1213.700 1001.500 H1226 V992.700 M1220 992.700 V1001.500"/></g><path d="M1262.500 1002 H1273.500 M1282 1002 H1430 M1438.500 1002 H1449.500 M1444 996.500 V1007.500" stroke="#444" stroke-width="1.300"/><rect x="1355.800" y="993.200" width="8.600" height="16.600" fill="#6e6e6e"/></svg>
<span class="t" style="left:12.70px;top:995.00px;font-size:16px;color:#444;transform:scaleX(0.8930);">Ready</span>
<span class="t" style="left:109.60px;top:995.00px;font-size:16px;color:#444;transform:scaleX(0.9589);">Accessibility: Good to go</span>
<span class="t" style="left:1469.20px;top:995.00px;font-size:16px;color:#444;transform:scaleX(0.9487);">120%</span>
</div>
<div id="annot">
<svg class="b" style="left:0px;top:0px;pointer-events:none" width="1538" height="1020" viewBox="0 0 1538 1020"><rect x="385.500" y="867.500" width="261" height="40" rx="4" fill="#d2d0ce" stroke="#000" stroke-width="5"/><rect x="282.700" y="56.700" width="125" height="42" rx="5" fill="none" stroke="#000" stroke-width="5"/><path d="M222.500 375.300 L379 220.500" stroke="#000" stroke-width="5.500" fill="none"/><path d="M395 204.700 L367.600 218.400 L377.500 222.400 L381.400 232.200 Z" fill="#000"/><path d="M800 726.500 L665.500 872.500" stroke="#000" stroke-width="5.500" fill="none"/><path d="M648.800 889 L661.600 861.500 L666.500 872 L676 874.600 Z" fill="#000"/><path d="M519.500 909.500 V933.500 L525 928.300 L529 937.300 L532.500 935.800 L528.600 927 H536.500 Z" fill="#fff" stroke="#000" stroke-width="1.200" stroke-linejoin="miter"/></svg>
<span class="t" style="left:440.20px;top:879.00px;font-size:19.3px;color:#323130;transform:scaleX(0.8696);"><u>M</u>ore Paper Sizes...</span>
<span class="t" style="left:138.20px;top:356.00px;font-size:42px;color:#000;font-weight:700;transform:scaleX(0.9304);">Size</span>
<span class="t" style="left:806.40px;top:688.00px;font-size:40.2px;color:#000;font-weight:700;transform:scaleX(1.0000);">More Paper Sizes</span>
</div>
<div class="b" style="left:0px;top:53px;width:2px;height:967px;background:#217346"></div>
<div class="b" style="left:1536px;top:53px;width:2px;height:967px;background:#217346"></div>
<div class="b" style="left:0px;top:1017.5px;width:1538px;height:2.5px;background:#217346"></div>
</div></body></html>
